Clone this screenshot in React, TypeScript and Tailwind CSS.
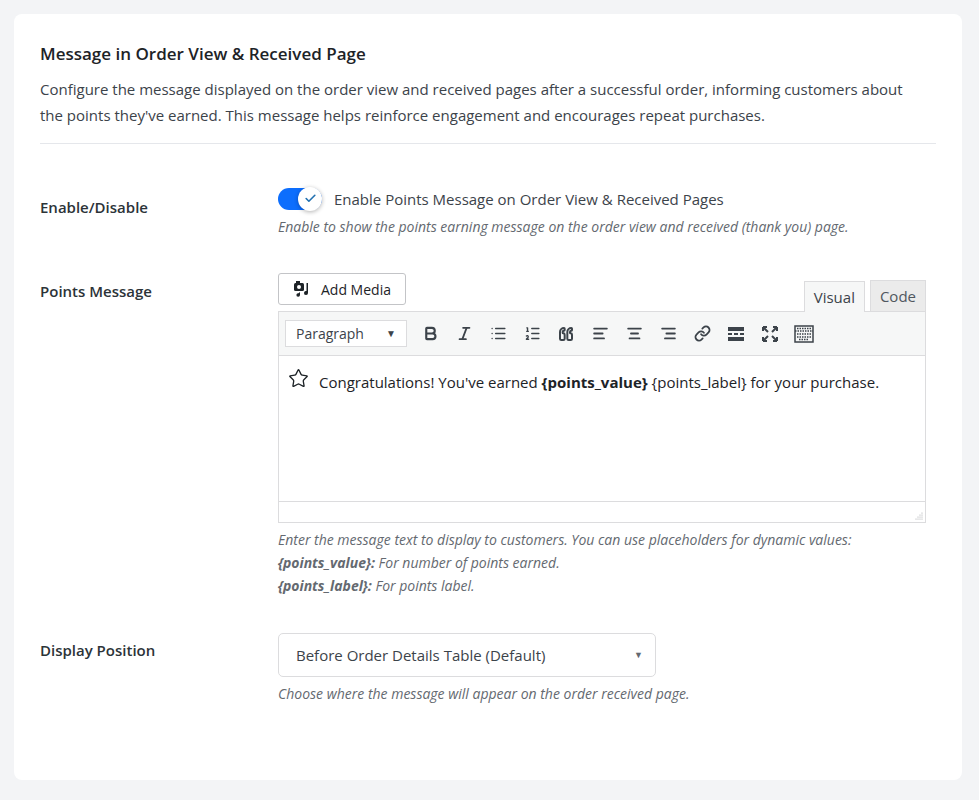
import React from "react";
import { Bold, Italic, List, ListOrdered, Quote, AlignLeft, AlignCenter, AlignRight, Link, Star, Check } from "lucide-react";

const font = { fontFamily: '"Open Sans", "Liberation Sans", Arial, sans-serif' };

function Row({ label, children, className = "" }: { label: string; children: React.ReactNode; className?: string }) {
  return (
    <div className={"flex " + className}>
      <div className="w-[238px] shrink-0 text-[15px] font-semibold text-[#2c3338]">{label}</div>
      <div className="flex-1">{children}</div>
    </div>
  );
}

export default function App() {
  const tb = "w-[34px] h-[28px] flex items-center justify-center text-[#3c434a]";
  return (
    <div className="min-h-[800px] bg-[#f3f4f6] p-[14px] pr-[17px]" style={font}>
      <div className="bg-white rounded-lg px-[26px] pt-[27px] pb-[42px] min-h-[766px]">
        <div className="text-[17px] font-semibold text-[#1d2327]">Message in Order View &amp; Received Page</div>
        <p className="text-[15px] leading-[26px] text-[#3c434a] mt-[9px] pr-[20px]">
          Configure the message displayed on the order view and received pages after a successful order, informing customers about the points they've earned. This message helps reinforce engagement and encourages repeat purchases.
        </p>
        <div className="border-t border-[#e5e7eb] mt-[15px]" />

        <Row label="Enable/Disable" className="mt-[44px] [&>div:first-child]:pt-[8px]">
          <div className="flex items-center gap-[12px]">
            <div className="relative w-[44px] h-[22px] rounded-full bg-[#0d6efd]">
              <div className="absolute right-0 -top-[1px] w-[24px] h-[24px] rounded-full bg-white shadow-[0_1px_4px_rgba(0,0,0,0.3)] flex items-center justify-center">
                <Check size={13} strokeWidth={3} className="text-[#2271b1]" />
              </div>
            </div>
            <span className="text-[15px] text-[#3c434a]">Enable Points Message on Order View &amp; Received Pages</span>
          </div>
          <p className="text-[14px] italic leading-[23px] text-[#646970] mt-[5px] pr-[40px]">
            Enable to show the points earning message on the order view and received (thank you) page.
          </p>
        </Row>

        <Row label="Points Message" className="mt-[35px] [&>div:first-child]:pt-[7px]">
          <div className="w-[648px]">
            <div className="flex items-end justify-between">
              <button className="h-[32px] px-[14px] border border-[#c3c4c7] rounded-[3px] bg-white flex items-center gap-[8px] text-[14px] text-[#1d2327] mb-[6px]">
                <svg width="20" height="18" viewBox="0 0 20 18"><rect x="1" y="3" width="10" height="8" rx="1.5" fill="#1d2327" /><circle cx="6" cy="7" r="2" fill="#fff" /><rect x="3" y="1" width="4" height="3" fill="#1d2327" /><path d="M15 3v10a2 2 0 1 1-1.5-1.9V3z M7 12v3a1.8 1.8 0 1 1-1.5-1.8" fill="#1d2327" /></svg>
                Add Media
              </button>
              <div className="flex gap-[5px]">
                <div className="px-[9px] h-[31px] flex items-center border border-[#dcdcde] border-b-0 bg-[#f6f7f7] text-[15px] text-[#3c434a] relative top-[1px]">Visual</div>
                <div className="px-[9px] h-[31px] flex items-center border border-[#dcdcde] border-b-0 bg-[#ebebeb] text-[15px] text-[#50575e]">Code</div>
              </div>
            </div>
            <div className="border border-[#dcdcde]">
              <div className="bg-[#f6f7f7] h-[44px] flex items-center px-[6px] border-b border-[#dcdcde]">
                <div className="w-[122px] h-[27px] border border-[#dcdcde] bg-white flex items-center justify-between px-[10px] text-[14px] text-[#3c434a] mr-[6px]">
                  Paragraph <span className="text-[10px]">▼</span>
                </div>
                <div className={tb}><Bold size={17} strokeWidth={3} /></div>
                <div className={tb}><Italic size={17} strokeWidth={2.5} /></div>
                <div className={tb}><List size={17} /></div>
                <div className={tb}><ListOrdered size={17} /></div>
                <div className={tb}><Quote size={16} strokeWidth={3} className="rotate-180" /></div>
                <div className={tb}><AlignLeft size={17} strokeWidth={2.5} /></div>
                <div className={tb}><AlignCenter size={17} strokeWidth={2.5} /></div>
                <div className={tb}><AlignRight size={17} strokeWidth={2.5} /></div>
                <div className={tb}><Link size={17} strokeWidth={2.5} /></div>
                <div className={tb}>
                  <svg width="18" height="14" viewBox="0 0 18 14"><rect x="1" y="0" width="16" height="4" fill="#3c434a" /><rect x="1" y="6" width="4" height="2" fill="#3c434a" /><rect x="7" y="6" width="4" height="2" fill="#3c434a" /><rect x="13" y="6" width="4" height="2" fill="#3c434a" /><rect x="1" y="10" width="16" height="4" fill="#3c434a" /></svg>
                </div>
                <div className={tb}>
                  <svg width="18" height="18" viewBox="0 0 18 18" fill="none" stroke="#3c434a" strokeWidth="2"><path d="M2 2l5 5M16 2l-5 5M2 16l5-5M16 16l-5-5" /><path d="M2 2h4M2 2v4M16 2h-4M16 2v4M2 16h4M2 16v-4M16 16h-4M16 16v-4" /></svg>
                </div>
                <div className={tb}>
                  <svg width="20" height="18" viewBox="0 0 20 18" fill="none" stroke="#3c434a" strokeWidth="1.5"><rect x="1" y="1" width="18" height="16" /><path d="M1 6h18M3 3.5h14M3 9h14M3 12h14M5 14.5h10" strokeDasharray="1.5 1" /></svg>
                </div>
              </div>
              <div className="h-[145px] px-[9px] pt-[16px] text-[15px] leading-[20px] text-[#1d2327]">
                <Star size={21} strokeWidth={1.5} className="inline -mt-[10px] mr-[10px]" />
                Congratulations! You've earned <b>{"{points_value}"}</b> {"{points_label}"} for your purchase.
              </div>
              <div className="h-[21px] border-t border-[#dcdcde] flex justify-end items-end p-[2px]">
                <svg width="8" height="8" viewBox="0 0 8 8" fill="#a7aaad"><circle cx="7" cy="1" r=".6" /><circle cx="5" cy="3" r=".6" /><circle cx="7" cy="3" r=".6" /><circle cx="3" cy="5" r=".6" /><circle cx="5" cy="5" r=".6" /><circle cx="7" cy="5" r=".6" /><circle cx="1" cy="7" r=".6" /><circle cx="3" cy="7" r=".6" /><circle cx="5" cy="7" r=".6" /><circle cx="7" cy="7" r=".6" /></svg>
              </div>
            </div>
            <p className="text-[14px] italic leading-[23px] text-[#646970] mt-[5px] pr-[40px]">
              Enter the message text to display to customers. You can use placeholders for dynamic values:
            </p>
            <p className="text-[14px] italic leading-[23px] text-[#646970]"><b>{"{points_value}:"}</b> For number of points earned.</p>
            <p className="text-[14px] italic leading-[23px] text-[#646970]"><b>{"{points_label}:"}</b> For points label.</p>
          </div>
        </Row>

        <Row label="Display Position" className="mt-[36px] [&>div:first-child]:pt-[6px]">
          <div className="w-[378px] h-[44px] border border-[#dcdcde] rounded-[5px] flex items-center justify-between pl-[17px] pr-[12px] text-[15px] text-[#3c434a]">
            Before Order Details Table (Default)
            <span className="text-[9px] text-[#646970]">▼</span>
          </div>
          <p className="text-[14px] italic leading-[23px] text-[#646970] mt-[5px]">Choose where the message will appear on the order received page.</p>
        </Row>
      </div>
    </div>
  );
}
